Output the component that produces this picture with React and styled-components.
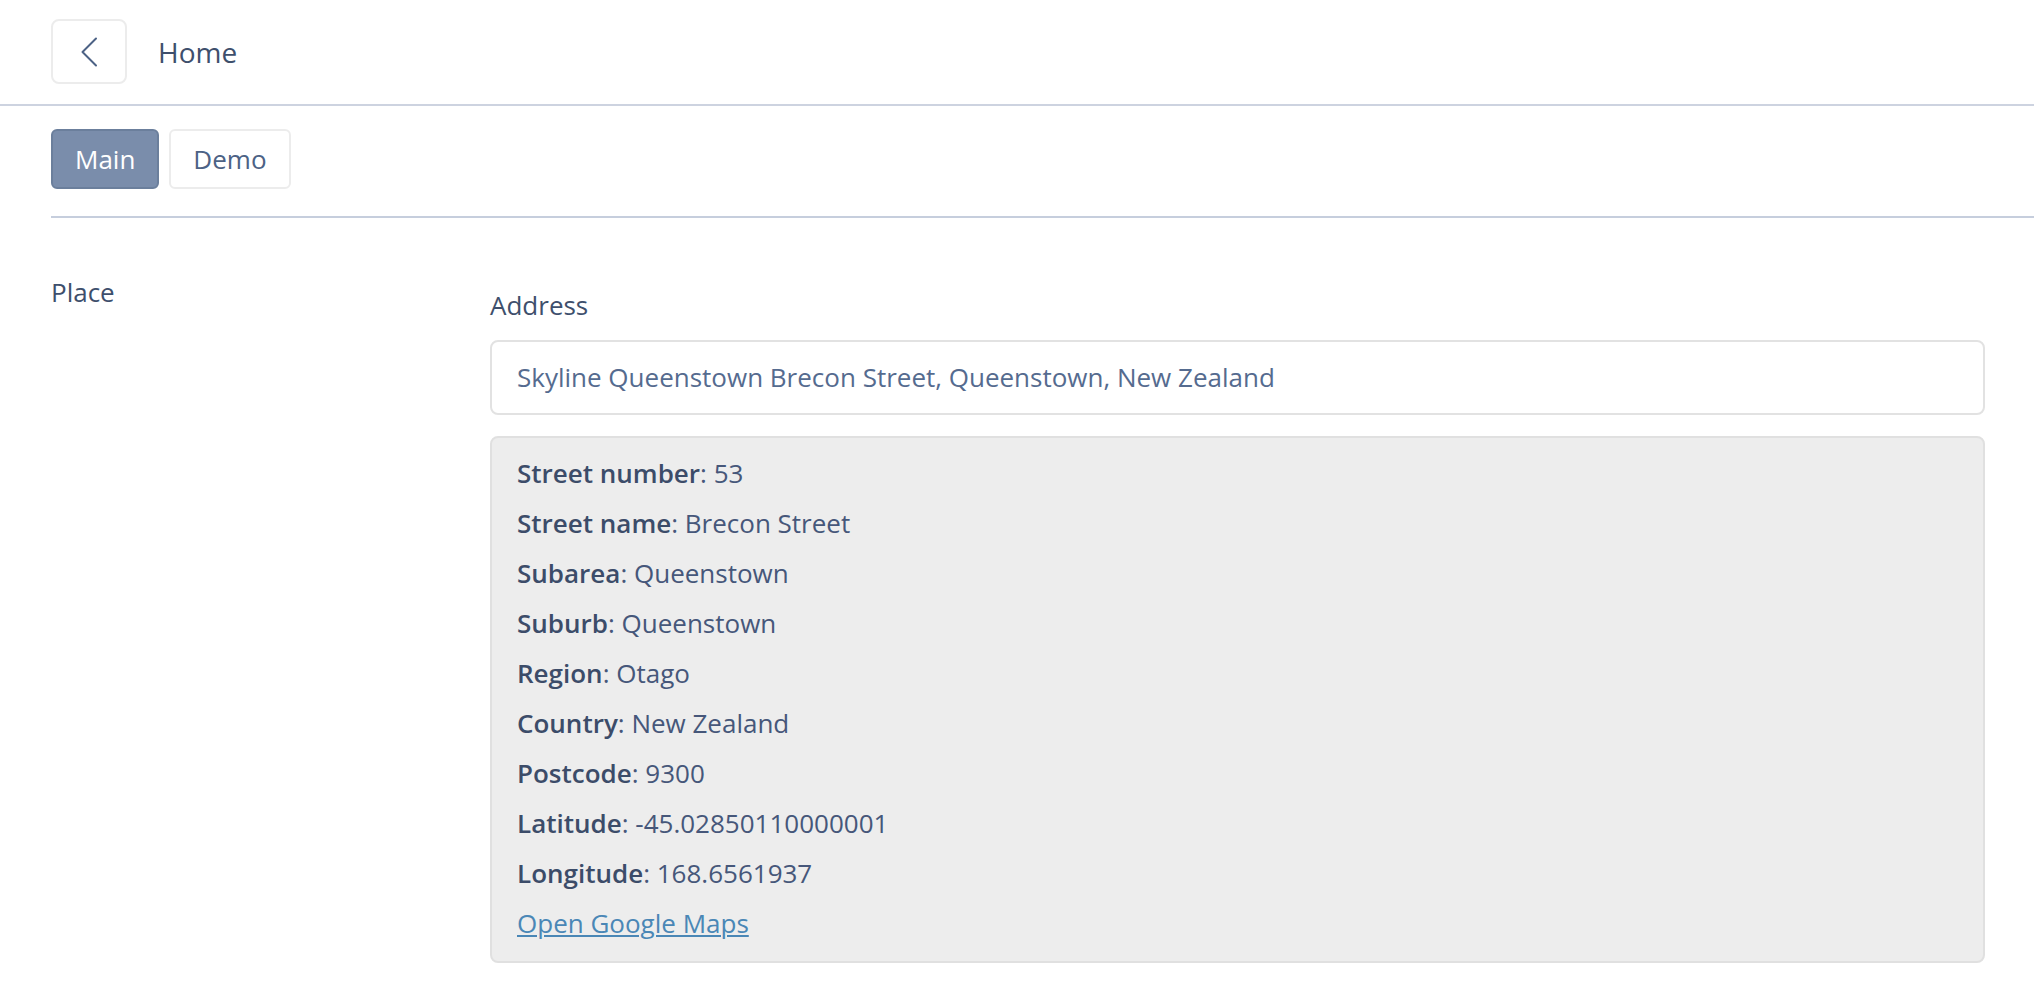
import React from "react";
import styled, { createGlobalStyle } from "styled-components";

const Global = createGlobalStyle`
  html, body { margin: 0; padding: 0; background: #ffffff; }
  body {
    font-family: "Open Sans", "Noto Sans", "Liberation Sans", sans-serif;
    color: #3e4f6c;
    font-size: 26px;
  }
  * { box-sizing: border-box; }
`;

const Header = styled.header`
  height: 106px;
  display: flex;
  align-items: flex-start;
  gap: 31px;
  padding: 19px 0 0 51px;
  border-bottom: 2px solid #cdd3e0;
`;

const BackButton = styled.button`
  width: 76px;
  height: 65px;
  border: 2px solid #ececec;
  border-radius: 8px;
  background: #fff;
  display: flex;
  align-items: center;
  justify-content: center;
  padding: 0;
  cursor: pointer;
`;

const Title = styled.h1`
  margin: 0;
  font-size: 28px;
  font-weight: 400;
  line-height: 67px;
  color: #3e4f6c;
`;

const TabBar = styled.nav`
  margin-left: 51px;
  padding: 23px 0 27px;
  display: flex;
  gap: 10px;
  border-bottom: 2px solid #c6cedd;
`;

const Tab = styled.button`
  height: 60px;
  padding: 0 22px;
  font-family: inherit;
  font-size: 26px;
  border-radius: 6px;
  border: 2px solid ${(p) => (p.$active ? "#6b7f9c" : "#ececec")};
  background: ${(p) => (p.$active ? "#7a8dab" : "#ffffff")};
  color: ${(p) => (p.$active ? "#ffffff" : "#4c6285")};
  cursor: pointer;
`;

const Section = styled.section`
  display: grid;
  grid-template-columns: 439px 1495px;
  padding: 56px 0 0 51px;
`;

const SectionLabel = styled.div`
  line-height: 36px;
  color: #3e4f6c;
`;

const Field = styled.div`
  padding-top: 13px;
  display: flex;
  flex-direction: column;
`;

const FieldLabel = styled.label`
  line-height: 36px;
  color: #3e4f6c;
  margin-bottom: 17px;
`;

const Input = styled.div`
  height: 75px;
  border: 2px solid #e2e2e2;
  border-radius: 8px;
  padding: 0 25px 2px;
  display: flex;
  align-items: center;
  color: #556b8f;
  background: #fff;
`;

const InfoBox = styled.div`
  margin-top: 21px;
  background: #ededed;
  border: 2px solid #e0e0e0;
  border-radius: 8px;
  padding: 10px 25px 13px;
`;

const Row = styled.div`
  line-height: 50px;
  color: #46577a;
`;

const Key = styled.span`
  font-weight: 600;
  color: #3c4c69;
`;

const MapLink = styled.a`
  color: #4a87b6;
  text-decoration: underline;
  text-decoration-thickness: 2px;
  text-underline-offset: 2px;
  line-height: 50px;
`;

const rows = [
  ["Street number", "53"],
  ["Street name", "Brecon Street"],
  ["Subarea", "Queenstown"],
  ["Suburb", "Queenstown"],
  ["Region", "Otago"],
  ["Country", "New Zealand"],
  ["Postcode", "9300"],
  ["Latitude", "-45.02850110000001"],
  ["Longitude", "168.6561937"],
];

export default function App() {
  return (
    <>
      <Global />
      <Header>
        <BackButton aria-label="Back">
          <svg width="18" height="30" viewBox="0 0 18 30" fill="none">
            <path d="M16 1.5 L2.5 15 L16 28.5" stroke="#4c6285" strokeWidth="2" strokeLinecap="round" strokeLinejoin="round" />
          </svg>
        </BackButton>
        <Title>Home</Title>
      </Header>
      <TabBar>
        <Tab $active>Main</Tab>
        <Tab>Demo</Tab>
      </TabBar>
      <Section>
        <SectionLabel>Place</SectionLabel>
        <Field>
          <FieldLabel>Address</FieldLabel>
          <Input>Skyline Queenstown Brecon Street, Queenstown, New Zealand</Input>
          <InfoBox>
            {rows.map(([k, v]) => (
              <Row key={k}>
                <Key>{k}</Key>: {v}
              </Row>
            ))}
            <Row>
              <MapLink href="#">Open Google Maps</MapLink>
            </Row>
          </InfoBox>
        </Field>
      </Section>
    </>
  );
}
